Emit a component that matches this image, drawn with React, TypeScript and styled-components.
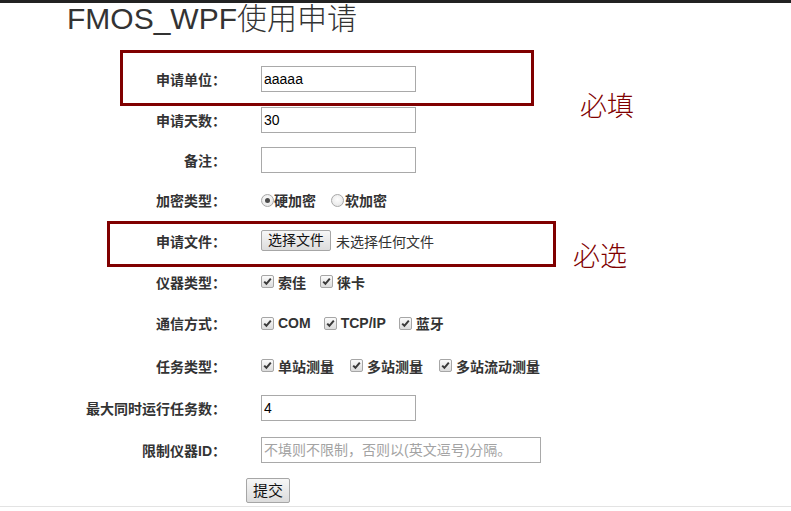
import React from "react";
import styled, { createGlobalStyle } from "styled-components";

const Global = createGlobalStyle`
  html, body { margin: 0; padding: 0; background: #fff; }
  body {
    font-family: "Liberation Sans", Arial, "Noto Sans CJK SC", sans-serif;
    color: #333;
  }
`;

const Page = styled.div`
  position: relative;
  width: 791px;
  height: 511px;
  overflow: hidden;
  background: #fff;
`;

const TopBar = styled.div`
  height: 3px;
  background: #222;
`;

const Title = styled.h1`
  margin: 0;
  height: 55px;
  padding-left: 67px;
  font-size: 30px;
  line-height: 32px;
  font-weight: 300;
  color: #333;
  font-family: "Liberation Sans", Arial, "Noto Sans CJK SC", sans-serif;
`;

const Form = styled.form`
  display: flex;
  flex-direction: column;
`;

const Row = styled.div<{ $h: number }>`
  display: grid;
  grid-template-columns: 226px 1fr;
  column-gap: 35px;
  align-items: center;
  height: ${(p) => p.$h}px;
`;

const Label = styled.label`
  text-align: right;
  font-weight: bold;
  font-size: 14px;
  color: #333;
  white-space: nowrap;
  font-family: "Liberation Sans", Arial, "Noto Sans CJK SC", sans-serif;
`;

const TextInput = styled.input<{ $w?: number }>`
  box-sizing: border-box;
  width: ${(p) => p.$w ?? 155}px;
  height: 26px;
  margin: 0;
  padding: 0 2px;
  border: 1px solid #a9a9a9;
  font-family: "Liberation Sans", Arial, "Noto Sans CJK SC", sans-serif;
  font-size: 14px;
  color: #000;
  outline: none;
  background: #fff;
  &::placeholder {
    color: #a3a3a3;
  }
`;

const Options = styled.div<{ $gap?: number }>`
  display: flex;
  align-items: center;
  gap: ${(p) => p.$gap ?? 14}px;
`;

const Option = styled.span<{ $inner?: number }>`
  display: inline-flex;
  align-items: center;
  gap: ${(p) => p.$inner ?? 4}px;
  font-weight: bold;
  font-size: 14px;
  color: #333;
  font-family: "Liberation Sans", Arial, "Noto Sans CJK SC", sans-serif;
`;

const RadioDot = styled.span<{ $checked?: boolean }>`
  position: relative;
  box-sizing: border-box;
  width: 13px;
  height: 13px;
  border-radius: 50%;
  border: 1px solid #a8a8a8;
  background: radial-gradient(circle at 50% 40%, #fdfdfd 0%, #e2e2e2 100%);
  &::after {
    content: "";
    display: ${(p) => (p.$checked ? "block" : "none")};
    position: absolute;
    left: 3px;
    top: 3px;
    width: 5px;
    height: 5px;
    border-radius: 50%;
    background: #4a4a4a;
  }
`;

const CheckBox = styled.span`
  box-sizing: border-box;
  width: 13px;
  height: 13px;
  border: 1px solid #a6a6a6;
  border-radius: 2px;
  background: linear-gradient(#fbfbfb, #dcdcdc);
  display: inline-flex;
  align-items: center;
  justify-content: center;
`;

const Check = () => (
  <CheckBox>
    <svg width="11" height="11" viewBox="0 0 11 11">
      <path d="M2.2 5.6 L4.4 7.8 L8.8 2.6" fill="none" stroke="#3a3a3a" strokeWidth="2" />
    </svg>
  </CheckBox>
);

const FileField = styled.div`
  display: flex;
  align-items: center;
`;

const GrayButton = styled.button`
  box-sizing: border-box;
  margin: 0;
  border: 1px solid #a6a6a6;
  border-radius: 2px;
  background: linear-gradient(#f7f7f7, #dcdcdc);
  color: #111;
  font-family: "Liberation Sans", Arial, "Noto Sans CJK SC", sans-serif;
  cursor: pointer;
`;

const FileButton = styled(GrayButton)`
  height: 21px;
  padding: 0 6px;
  font-size: 14px;
  line-height: 19px;
`;

const FileStatus = styled.span`
  margin-left: 5px;
  font-size: 14px;
  color: #333;
`;

const SubmitRow = styled.div`
  height: 36px;
  padding-left: 246px;
  display: flex;
  align-items: flex-start;
  padding-top: 8px;
  box-sizing: border-box;
`;

const SubmitButton = styled(GrayButton)`
  height: 25px;
  padding: 0 6px;
  font-size: 15px;
  line-height: 23px;
`;

const Footer = styled.div`
  border-top: 1px solid #e3e3e3;
  height: 6px;
`;

const Mark = styled.div<{ $x: number; $y: number; $w: number; $h: number }>`
  position: absolute;
  box-sizing: border-box;
  left: ${(p) => p.$x}px;
  top: ${(p) => p.$y}px;
  width: ${(p) => p.$w}px;
  height: ${(p) => p.$h}px;
  border: 3px solid #800000;
  pointer-events: none;
`;

const Note = styled.div<{ $x: number; $y: number }>`
  position: absolute;
  left: ${(p) => p.$x}px;
  top: ${(p) => p.$y}px;
  font-size: 27px;
  line-height: 32px;
  color: #800000;
  font-weight: 300;
  font-family: "Noto Sans CJK SC", sans-serif;
`;

export default function App() {
  return (
    <Page>
      <Global />
      <TopBar />
      <Title>FMOS_WPF使用申请</Title>
      <Form onSubmit={(e) => e.preventDefault()}>
        <Row $h={41}>
          <Label>申请单位：</Label>
          <TextInput defaultValue="aaaaa" />
        </Row>
        <Row $h={41}>
          <Label>申请天数：</Label>
          <TextInput defaultValue="30" />
        </Row>
        <Row $h={40}>
          <Label>备注：</Label>
          <TextInput defaultValue="" />
        </Row>
        <Row $h={40}>
          <Label>加密类型：</Label>
          <Options $gap={15}>
            <Option $inner={0}>
              <RadioDot $checked />
              硬加密
            </Option>
            <Option $inner={1}>
              <RadioDot />
              软加密
            </Option>
          </Options>
        </Row>
        <Row $h={41}>
          <Label>申请文件：</Label>
          <FileField>
            <FileButton type="button">选择文件</FileButton>
            <FileStatus>未选择任何文件</FileStatus>
          </FileField>
        </Row>
        <Row $h={41}>
          <Label>仪器类型：</Label>
          <Options>
            <Option>
              <Check />
              索佳
            </Option>
            <Option>
              <Check />
              徕卡
            </Option>
          </Options>
        </Row>
        <Row $h={42}>
          <Label>通信方式：</Label>
          <Options $gap={13}>
            <Option>
              <Check />
              COM
            </Option>
            <Option>
              <Check />
              TCP/IP
            </Option>
            <Option>
              <Check />
              蓝牙
            </Option>
          </Options>
        </Row>
        <Row $h={43}>
          <Label>任务类型：</Label>
          <Options $gap={16}>
            <Option>
              <Check />
              单站测量
            </Option>
            <Option>
              <Check />
              多站测量
            </Option>
            <Option>
              <Check />
              多站流动测量
            </Option>
          </Options>
        </Row>
        <Row $h={42}>
          <Label>最大同时运行任务数：</Label>
          <TextInput defaultValue="4" />
        </Row>
        <Row $h={41}>
          <Label>限制仪器ID：</Label>
          <TextInput $w={280} placeholder="不填则不限制，否则以(英文逗号)分隔。" />
        </Row>
        <SubmitRow>
          <SubmitButton type="submit">提交</SubmitButton>
        </SubmitRow>
      </Form>
      <Footer />

      <Mark $x={120} $y={50} $w={414} $h={56} />
      <Note $x={580} $y={89}>必填</Note>
      <Mark $x={107} $y={221} $w={449} $h={46} />
      <Note $x={573} $y={239}>必选</Note>
    </Page>
  );
}
